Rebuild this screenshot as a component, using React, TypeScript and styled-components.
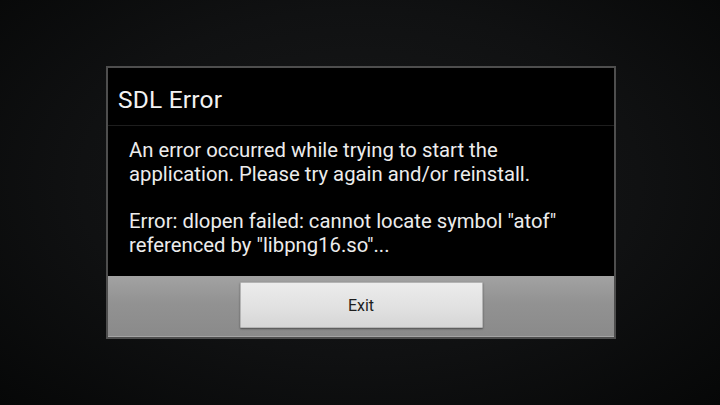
import styled, { createGlobalStyle } from "styled-components";

const GlobalStyle = createGlobalStyle`
  html, body {
    margin: 0;
    padding: 0;
  }
  body {
    font-family: Roboto, "Noto Sans", sans-serif;
  }
`;

const Screen = styled.div`
  width: 720px;
  height: 405px;
  background: radial-gradient(ellipse at 50% 45%, #18191a 0%, #101112 55%, #060707 100%);
  display: flex;
  align-items: center;
  justify-content: center;
  padding-left: 2px;
  box-sizing: border-box;
`;

const Dialog = styled.div`
  width: 510px;
  height: 273px;
  box-sizing: border-box;
  border: 2px solid #4e4e4e;
  background: #000;
  display: flex;
  flex-direction: column;
`;

const TitleBar = styled.div`
  height: 58px;
  flex-shrink: 0;
  box-sizing: border-box;
  border-bottom: 1px solid #1e1e1e;
  display: flex;
  align-items: center;
  padding: 6px 0 0 10px;
`;

const Title = styled.h1`
  margin: 0;
  font-size: 24.5px;
  font-weight: 400;
  color: #f2f2f2;
  letter-spacing: 0.2px;
`;

const Body = styled.div`
  flex: 1;
  min-height: 0;
  overflow: hidden;
  padding: 13px 16px 0 21px;
  color: #ececec;
  font-size: 20.3px;
  line-height: 23.5px;
`;

const Paragraph = styled.p`
  margin: 0 0 24px;
`;

const ButtonBar = styled.div`
  height: 61px;
  flex-shrink: 0;
  box-sizing: border-box;
  background: linear-gradient(to bottom, #a2a2a2 0%, #929292 45%, #8a8a8a 100%);
  border-bottom: 1px solid #a4a4a4;
  display: flex;
  justify-content: center;
  padding-top: 6px;
`;

const Button = styled.button`
  width: 243px;
  height: 46px;
  border: 1px solid #b4b4b4;
  border-radius: 1px;
  background: linear-gradient(to bottom, #ececec 0%, #e0e0e0 60%, #d6d6d6 100%);
  box-shadow: 0 1px 2px rgba(0, 0, 0, 0.45);
  font-family: Roboto, "Noto Sans", sans-serif;
  font-size: 16px;
  color: #1e1e1e;
  padding: 0;
  cursor: pointer;
`;

export default function App() {
  return (
    <>
      <GlobalStyle />
      <Screen>
        <Dialog>
          <TitleBar>
            <Title>SDL Error</Title>
          </TitleBar>
          <Body>
            <Paragraph>
              An error occurred while trying to start the
              <br />
              application. Please try again and/or reinstall.
            </Paragraph>
            <Paragraph>
              Error: dlopen failed: cannot locate symbol "atof"
              <br />
              referenced by "libpng16.so"...
            </Paragraph>
          </Body>
          <ButtonBar>
            <Button>Exit</Button>
          </ButtonBar>
        </Dialog>
      </Screen>
    </>
  );
}
